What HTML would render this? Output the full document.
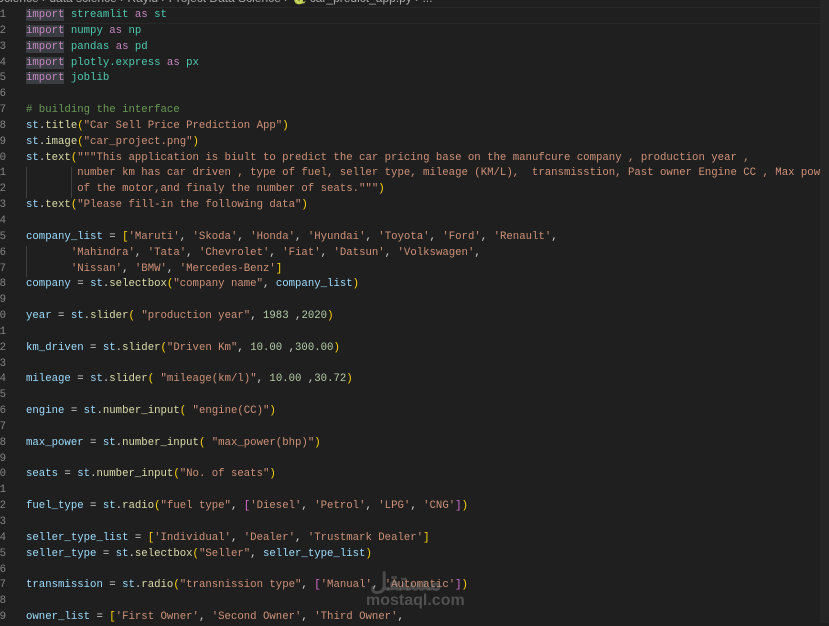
<!DOCTYPE html><html><head><style>
body{margin:0;width:829px;height:623px;background:#1f1f1f;overflow:hidden;position:relative;font-family:"Liberation Mono",monospace}
.bc{position:absolute;top:-9px;left:-4px;font:12px "Liberation Sans",sans-serif;color:#a9a9a9;white-space:pre}
.code{position:absolute;top:8px;left:26px;font-size:10.68px;line-height:15.84px;white-space:pre;color:#d4d4d4}
.ln{position:absolute;top:8px;left:-2px;font-size:10.68px;line-height:15.84px;white-space:pre;color:#858585;text-align:right;width:8px}
.k{color:#c586c0;background:#3a3d41}.v{color:#9cdcfe}.f{color:#dcdcaa}.m{color:#4ec9b0}.s{color:#ce9178}.c{color:#6a9955}.n{color:#b5cea8}.b{color:#ffd700}.p{color:#da70d6}.a{color:#c586c0}
.g{position:absolute;width:1px;background:#404040}
.cur{position:absolute;left:26px;top:7px;width:794px;height:15px;border:1px solid #282828}
.sb{position:absolute;right:0;top:0;width:9px;height:623px;background:#252525}
.wm{position:absolute;left:366px;top:592px;font:bold 16px "Liberation Sans",sans-serif;color:rgba(140,140,140,.45)}
.wa{position:absolute;left:370px;top:562px;font:bold 24px "Noto Sans CJK SC",sans-serif;color:rgba(140,140,140,.4)}
</style></head><body>
<div class="bc">Science › data science › Rayid › Project Data Science › 🐍 car_predict_app.py › ...</div>
<div class="cur"></div>
<div class="g" style="left:26px;top:167px;height:31px"></div>
<div class="g" style="left:71px;top:167px;height:31px"></div>
<div class="g" style="left:26px;top:246px;height:31px"></div>
<div class="ln">1
2
3
4
5
6
7
8
9
0
1
2
3
4
5
6
7
8
9
0
1
2
3
4
5
6
7
8
9
0
1
2
3
4
5
6
7
8
9</div>
<div class="code"><span class="k">import</span> <span class="m">streamlit</span> <span class="a">as</span> <span class="m">st</span>
<span class="k">import</span> <span class="m">numpy</span> <span class="a">as</span> <span class="m">np</span>
<span class="k">import</span> <span class="m">pandas</span> <span class="a">as</span> <span class="m">pd</span>
<span class="k">import</span> <span class="m">plotly.express</span> <span class="a">as</span> <span class="m">px</span>
<span class="k">import</span> <span class="m">joblib</span>

<span class="c"># building the interface</span>
<span class="v">st</span>.<span class="f">title</span><span class="b">(</span><span class="s">"Car Sell Price Prediction App"</span><span class="b">)</span>
<span class="v">st</span>.<span class="f">image</span><span class="b">(</span><span class="s">"car_project.png"</span><span class="b">)</span>
<span class="v">st</span>.<span class="f">text</span><span class="b">(</span><span class="s">"""This application is biult to predict the car pricing base on the manufcure company , production year ,
        number km has car driven , type of fuel, seller type, mileage (KM/L),  transmisstion, Past owner Engine CC , Max pow
        of the motor,and finaly the number of seats."""</span><span class="b">)</span>
<span class="v">st</span>.<span class="f">text</span><span class="b">(</span><span class="s">"Please fill-in the following data"</span><span class="b">)</span>

<span class="v">company_list</span> = <span class="b">[</span><span class="s">'Maruti'</span>, <span class="s">'Skoda'</span>, <span class="s">'Honda'</span>, <span class="s">'Hyundai'</span>, <span class="s">'Toyota'</span>, <span class="s">'Ford'</span>, <span class="s">'Renault'</span>,
       <span class="s">'Mahindra'</span>, <span class="s">'Tata'</span>, <span class="s">'Chevrolet'</span>, <span class="s">'Fiat'</span>, <span class="s">'Datsun'</span>, <span class="s">'Volkswagen'</span>,
       <span class="s">'Nissan'</span>, <span class="s">'BMW'</span>, <span class="s">'Mercedes-Benz'</span><span class="b">]</span>
<span class="v">company</span> = <span class="v">st</span>.<span class="f">selectbox</span><span class="b">(</span><span class="s">"company name"</span>, <span class="v">company_list</span><span class="b">)</span>

<span class="v">year</span> = <span class="v">st</span>.<span class="f">slider</span><span class="b">(</span> <span class="s">"production year"</span>, <span class="n">1983</span> ,<span class="n">2020</span><span class="b">)</span>

<span class="v">km_driven</span> = <span class="v">st</span>.<span class="f">slider</span><span class="b">(</span><span class="s">"Driven Km"</span>, <span class="n">10.00</span> ,<span class="n">300.00</span><span class="b">)</span>

<span class="v">mileage</span> = <span class="v">st</span>.<span class="f">slider</span><span class="b">(</span> <span class="s">"mileage(km/l)"</span>, <span class="n">10.00</span> ,<span class="n">30.72</span><span class="b">)</span>

<span class="v">engine</span> = <span class="v">st</span>.<span class="f">number_input</span><span class="b">(</span> <span class="s">"engine(CC)"</span><span class="b">)</span>

<span class="v">max_power</span> = <span class="v">st</span>.<span class="f">number_input</span><span class="b">(</span> <span class="s">"max_power(bhp)"</span><span class="b">)</span>

<span class="v">seats</span> = <span class="v">st</span>.<span class="f">number_input</span><span class="b">(</span><span class="s">"No. of seats"</span><span class="b">)</span>

<span class="v">fuel_type</span> = <span class="v">st</span>.<span class="f">radio</span><span class="b">(</span><span class="s">"fuel type"</span>, <span class="p">[</span><span class="s">'Diesel'</span>, <span class="s">'Petrol'</span>, <span class="s">'LPG'</span>, <span class="s">'CNG'</span><span class="p">]</span><span class="b">)</span>

<span class="v">seller_type_list</span> = <span class="b">[</span><span class="s">'Individual'</span>, <span class="s">'Dealer'</span>, <span class="s">'Trustmark Dealer'</span><span class="b">]</span>
<span class="v">seller_type</span> = <span class="v">st</span>.<span class="f">selectbox</span><span class="b">(</span><span class="s">"Seller"</span>, <span class="v">seller_type_list</span><span class="b">)</span>

<span class="v">transmission</span> = <span class="v">st</span>.<span class="f">radio</span><span class="b">(</span><span class="s">"transnission type"</span>, <span class="p">[</span><span class="s">'Manual'</span>, <span class="s">'Automatic'</span><span class="p">]</span><span class="b">)</span>

<span class="v">owner_list</span> = <span class="b">[</span><span class="s">'First Owner'</span>, <span class="s">'Second Owner'</span>, <span class="s">'Third Owner'</span>,</div>
<div class="sb"></div>
<div class="wa">مستقل</div>
<div class="wm">mostaql.com</div>
</body></html>
